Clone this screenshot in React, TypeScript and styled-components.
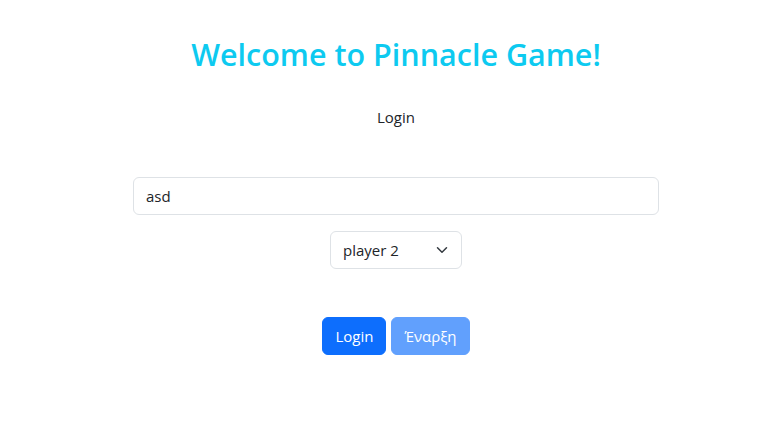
import React from 'react';
import styled, { createGlobalStyle } from 'styled-components';

const GlobalStyle = createGlobalStyle`
  html, body {
    margin: 0;
    padding: 0;
    background: #fff;
  }
  body {
    font-family: 'Open Sans', 'Noto Sans', 'Liberation Sans', sans-serif;
    font-size: 16px;
    line-height: 1.5;
    color: #212529;
  }
  *, *::before, *::after {
    box-sizing: border-box;
  }
`;

const Page = styled.main`
  display: flex;
  flex-direction: column;
  align-items: center;
  padding: 34px 0 0 16px;
`;

const Title = styled.h1`
  margin: 0;
  font-size: 30.5px;
  font-weight: 600;
  line-height: 40px;
  color: #0dcaf0;
`;

const Subtitle = styled.p`
  margin: 31px 0 0;
  font-size: 15px;
  line-height: 24px;
`;

const Form = styled.form`
  display: flex;
  flex-direction: column;
  align-items: center;
  margin-top: 48px;
  gap: 16px;
`;

const TextInput = styled.input`
  display: block;
  width: 526px;
  height: 38px;
  padding: 6px 12px;
  font-family: inherit;
  font-size: 15px;
  color: #212529;
  background: #fff;
  border: 1px solid #dee2e6;
  border-radius: 6px;
  outline: none;
`;

const SelectWrap = styled.div`
  position: relative;
  width: 132px;
`;

const Select = styled.select`
  display: block;
  width: 100%;
  height: 38px;
  padding: 6px 36px 6px 12px;
  font-family: inherit;
  font-size: 15px;
  color: #212529;
  background: #fff;
  border: 1px solid #dee2e6;
  border-radius: 6px;
  appearance: none;
  outline: none;
`;

const Chevron = styled.svg`
  position: absolute;
  right: 12px;
  top: 13px;
  width: 16px;
  height: 12px;
  pointer-events: none;
`;

const Actions = styled.div`
  display: flex;
  gap: 5px;
  margin-top: 48px;
`;

const Button = styled.button<{ $disabled?: boolean }>`
  height: 38px;
  padding: 6px 12px;
  font-family: inherit;
  font-size: 15px;
  line-height: 24px;
  color: #fff;
  background: #0d6efd;
  border: 1px solid #0d6efd;
  border-radius: 6px;
  opacity: ${(p) => (p.$disabled ? 0.65 : 1)};
  cursor: ${(p) => (p.$disabled ? 'default' : 'pointer')};
`;

export default function App() {
  return (
    <>
      <GlobalStyle />
      <Page>
        <Title>Welcome to Pinnacle Game!</Title>
        <Subtitle>Login</Subtitle>
        <Form onSubmit={(e) => e.preventDefault()}>
          <TextInput type="text" defaultValue="asd" />
          <SelectWrap>
            <Select defaultValue="2">
              <option value="1">player 1</option>
              <option value="2">player 2</option>
            </Select>
            <Chevron viewBox="0 0 16 16">
              <path
                d="m2 5 6 6 6-6"
                fill="none"
                stroke="#343a40"
                strokeWidth="2"
                strokeLinecap="round"
                strokeLinejoin="round"
              />
            </Chevron>
          </SelectWrap>
        </Form>
        <Actions>
          <Button type="button">Login</Button>
          <Button type="button" $disabled>
            Έναρξη
          </Button>
        </Actions>
      </Page>
    </>
  );
}
